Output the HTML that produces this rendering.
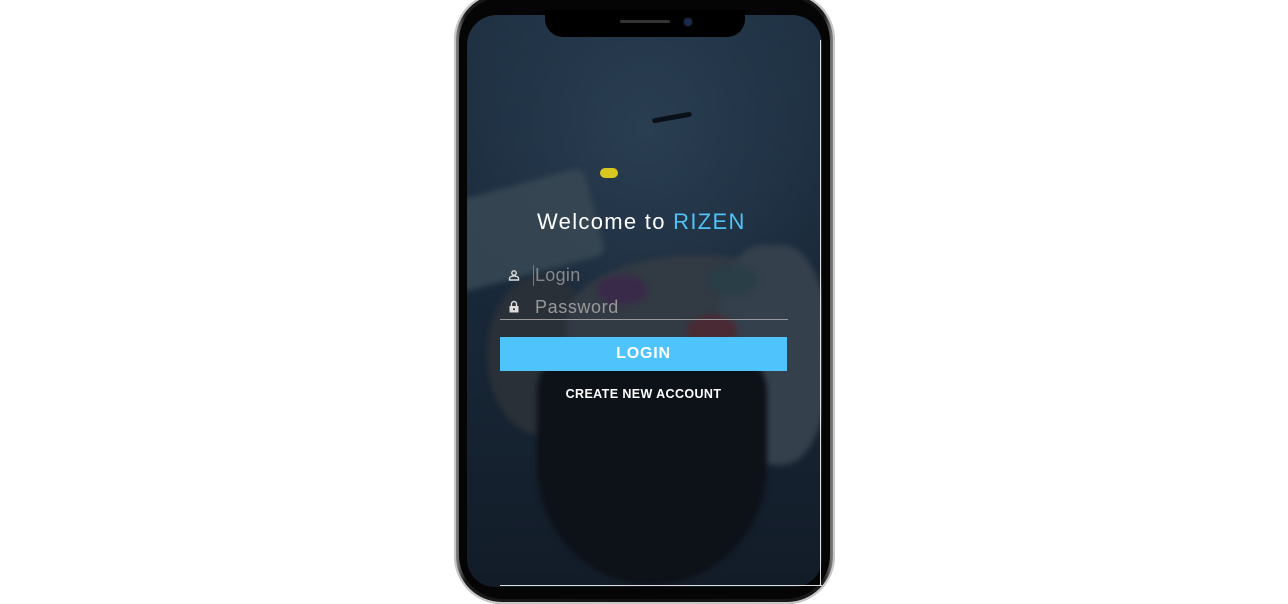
<!DOCTYPE html>
<html><head><meta charset="utf-8"><style>
*{margin:0;padding:0;box-sizing:border-box}
body{width:1288px;height:600px;background:#fff;position:relative;overflow:hidden;font-family:"Liberation Sans",sans-serif}
.phone{position:absolute;left:454px;top:-8px;width:381px;height:612px;border-radius:48px;background:linear-gradient(90deg,#9a9a9a,#1a1a1a 3%,#111 50%,#1a1a1a 97%,#9a9a9a);box-shadow:0 0 0 2px #c8c8c8 inset}
.bezel{position:absolute;left:459px;top:-3px;width:371px;height:602px;border-radius:44px;background:#050505}
.screen{position:absolute;left:467px;top:15px;width:355px;height:572px;border-radius:30px 30px 28px 28px;overflow:hidden;
background:radial-gradient(ellipse 60% 40% at 50% 20%,#2a3e52,transparent),linear-gradient(#1e3042,#1a2a3b 40%,#121c28 100%)}
.blob{position:absolute;filter:blur(3px)}
.notch{position:absolute;left:545px;top:10px;width:200px;height:27px;background:#000;border-radius:0 0 18px 18px}
.spk{position:absolute;left:620px;top:20px;width:50px;height:3px;border-radius:2px;background:#333}
.cam{position:absolute;left:684px;top:18px;width:8px;height:8px;border-radius:50%;background:#1a2a4a;box-shadow:0 0 0 1px #111}
.t{position:absolute;color:#fff}
</style></head><body>
<div class="phone"></div><div class="bezel"></div>
<div class="screen">
 <div class="blob" style="left:-20px;top:170px;width:150px;height:90px;background:#3a4a55;transform:rotate(-15deg);border-radius:10px;opacity:.8"></div>
 <div class="blob" style="left:20px;top:260px;width:110px;height:160px;background:#2a3038;border-radius:50%"></div>
 <div class="blob" style="left:100px;top:240px;width:260px;height:130px;background:#323a44;border-radius:50% 50% 30% 30%"></div>
 <div class="blob" style="left:250px;top:230px;width:110px;height:220px;background:#34404c;border-radius:40%"></div>
 <div class="blob" style="left:70px;top:330px;width:230px;height:240px;background:#0d1118;border-radius:20% 20% 50% 50%"></div>
 <div class="blob" style="left:130px;top:260px;width:50px;height:30px;background:#3a2a4a;border-radius:50%"></div>
 <div class="blob" style="left:240px;top:250px;width:50px;height:30px;background:#2a3e48;border-radius:50%"></div>
 <div class="blob" style="left:220px;top:300px;width:50px;height:30px;background:#4a2a34;border-radius:50%"></div>
 <div style="position:absolute;left:133px;top:153px;width:18px;height:10px;background:#d8c820;border-radius:5px"></div>
 <div style="position:absolute;left:185px;top:100px;width:40px;height:5px;background:#0a1018;border-radius:3px;transform:rotate(-10deg)"></div>
</div>
<div class="notch"></div><div class="spk"></div><div class="cam"></div>
<div style="position:absolute;left:500px;top:585px;width:322px;height:1px;background:#ddd"></div>
<div style="position:absolute;left:820px;top:40px;width:1px;height:545px;background:#ddd"></div>
<div class="t" style="left:537px;top:209px;font-size:22px;letter-spacing:1.3px;white-space:nowrap">Welcome to <span style="color:#4fc3f7">RIZEN</span></div>
<svg style="position:absolute;left:508px;top:269px" width="12" height="12" viewBox="0 0 12 12"><circle cx="6" cy="4" r="2.2" fill="none" stroke="#ddd" stroke-width="1.4"/><path d="M1.5 11v-1.5c0-1.5 2-2.5 4.5-2.5s4.5 1 4.5 2.5V11z" fill="none" stroke="#ddd" stroke-width="1.4"/></svg>
<div class="t" style="left:533px;top:265px;font-size:18px;color:#888;border-left:1px solid #3f7fff;padding-left:1px;letter-spacing:.3px">Login</div>
<svg style="position:absolute;left:508px;top:300px" width="12" height="13" viewBox="0 0 12 13"><path d="M3.5 6V4a2.5 2.5 0 0 1 5 0v2" fill="none" stroke="#ddd" stroke-width="1.4"/><rect x="1.5" y="6" width="9" height="6.5" fill="#ddd"/><circle cx="6" cy="9.2" r="1" fill="#222"/></svg>
<div class="t" style="left:535px;top:297px;font-size:18px;color:#999;letter-spacing:.6px">Password</div>
<div style="position:absolute;left:500px;top:319px;width:288px;height:1px;background:#999"></div>
<div style="position:absolute;left:500px;top:337px;width:287px;height:34px;background:#4fc3fb;color:#fff;font-weight:bold;font-size:16px;text-align:center;line-height:34px;letter-spacing:.8px">LOGIN</div>
<div class="t" style="left:500px;width:287px;text-align:center;top:387px;font-size:12.5px;font-weight:bold;letter-spacing:.4px">CREATE NEW ACCOUNT</div>
</body></html>
